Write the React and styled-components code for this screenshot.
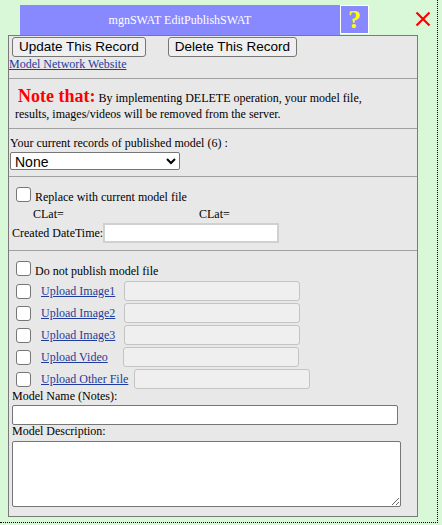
import React from "react";
import styled, { createGlobalStyle } from "styled-components";

const GlobalStyle = createGlobalStyle`
  html, body {
    margin: 0;
    padding: 0;
    background: #d8f8d8;
  }
  body {
    font-family: "Liberation Serif", "Times New Roman", serif;
    font-size: 12px;
    color: #000;
  }
`;

const Frame = styled.div`
  width: 438px;
  height: 523px;
  box-sizing: border-box;
  border-right: 1px dotted #000;
  border-bottom: 1px dotted #000;
`;

const TopBar = styled.div`
  display: flex;
  align-items: flex-start;
  padding: 5px 0 0 20px;
  height: 30px;
`;

const Title = styled.div`
  width: 320px;
  height: 30px;
  background: #8888ff;
  color: #fff;
  font-size: 12px;
  display: flex;
  align-items: center;
  justify-content: center;
`;

const HelpBox = styled.div`
  width: 29px;
  height: 29px;
  box-sizing: border-box;
  border: 1px solid #fff;
  background: #8888ff;
  color: #ffff00;
  font-weight: bold;
  font-size: 26px;
  line-height: 27px;
  text-align: center;
`;

const CloseIcon = styled.svg`
  margin: 6px 0 0 46px;
  width: 16px;
  height: 16px;
`;

const Panel = styled.div`
  margin-left: 8px;
  width: 410px;
  box-sizing: border-box;
  border: 1px solid #7a7a7a;
  background: #e8e8e8;
`;

const Section = styled.div`
  padding: ${(p) => p.$pad};
  border-bottom: ${(p) => (p.$last ? "none" : "1px solid #a0a0a0")};
`;

const ButtonRow = styled.div`
  display: flex;
  gap: 22px;
  padding-left: 3px;
`;

const Button = styled.button`
  height: 20px;
  box-sizing: border-box;
  padding: 1px 6px;
  font-family: "Liberation Sans", Arial, sans-serif;
  font-size: 13.5px;
  line-height: 16px;
  color: #000;
  background: #efefef;
  border: 1px solid #767676;
  border-radius: 3px;
`;

const SiteLink = styled.a`
  display: block;
  font-size: 12px;
  line-height: 14px;
  color: #1f3b9c;
  text-decoration: underline;
`;

const Note = styled.div`
  line-height: 16px;
  text-indent: 3px;
`;

const NoteHead = styled.span`
  color: #ff0000;
  font-weight: bold;
  font-size: 18px;
`;

const Label = styled.div`
  line-height: ${(p) => p.$lh || "15px"};
  padding-left: ${(p) => p.$indent || "0"};
`;

const Select = styled.select`
  display: block;
  margin-top: 1px;
  width: 170px;
  height: 18px;
  font-family: "Liberation Sans", Arial, sans-serif;
  font-size: 14px;
  background: #fff;
  border: 1px solid #767676;
  border-radius: 2px;
  color: #000;
`;

const CheckRow = styled.div`
  display: flex;
  align-items: flex-end;
  height: 18px;
  margin-bottom: ${(p) => p.$after || "0"};
`;

const CheckBox = styled.input.attrs({ type: "checkbox" })`
  appearance: none;
  width: 15px;
  height: 15px;
  box-sizing: border-box;
  margin: 0 0 3px 7px;
  background: #fff;
  border: 1px solid #767676;
  border-radius: 3px;
  flex: none;
`;

const CheckText = styled.span`
  margin-left: 4px;
  line-height: 15px;
`;

const CoordRow = styled.div`
  display: grid;
  grid-template-columns: 166px auto;
  padding-left: 24px;
  margin-top: 2px;
  line-height: 15px;
`;

const FieldRow = styled.div`
  display: flex;
  align-items: center;
  margin-top: 1px;
  padding-left: 3px;
`;

const DateInput = styled.input`
  width: 176px;
  height: 20px;
  box-sizing: border-box;
  border: 2px solid #d0d0d0;
  background: #fff;
  padding: 0 2px;
`;

const UploadRow = styled.div`
  display: flex;
  align-items: center;
  height: 22px;
  & > input[type="checkbox"] {
    margin-bottom: 0;
  }
`;

const UploadLink = styled.a`
  margin-left: 10px;
  color: #1f3b9c;
  text-decoration: underline;
  line-height: 15px;
`;

const FileField = styled.input`
  margin-left: ${(p) => p.$lead}px;
  width: 176px;
  height: 20px;
  box-sizing: border-box;
  background: #efefef;
  border: 1px solid #c4c4c4;
  border-radius: 3px;
`;

const TextField = styled.input`
  display: block;
  margin: 2px 0 0 3px;
  width: 386px;
  height: 20px;
  box-sizing: border-box;
  background: #fff;
  border: 1px solid #767676;
  border-radius: 2px;
`;

const TextArea = styled.textarea`
  display: block;
  margin: 3px 0 0 3px;
  width: 389px;
  height: 66px;
  box-sizing: border-box;
  background: #fff;
  border: 1px solid #767676;
  border-radius: 2px;
  resize: both;
`;

const uploads = [
  { label: "Upload Image1", lead: 9 },
  { label: "Upload Image2", lead: 9 },
  { label: "Upload Image3", lead: 9 },
  { label: "Upload Video", lead: 15 },
  { label: "Upload Other File", lead: 6 },
];

export default function App() {
  return (
    <>
      <GlobalStyle />
      <Frame>
        <TopBar>
          <Title>mgnSWAT EditPublishSWAT</Title>
          <HelpBox>?</HelpBox>
          <CloseIcon viewBox="0 0 16 16">
            <path d="M1.5 1.5 L14.5 14.5 M14.5 1.5 L1.5 14.5" stroke="#ff0000" strokeWidth="2.2" fill="none" />
          </CloseIcon>
        </TopBar>
        <Panel>
          <Section $pad="1px 0 7px 0">
            <ButtonRow>
              <Button>Update This Record</Button>
              <Button>Delete This Record</Button>
            </ButtonRow>
            <SiteLink href="#">Model Network Website</SiteLink>
          </Section>
          <Section $pad="9px 6px 6px 6px">
            <Note>
              <NoteHead>Note that:</NoteHead> By implementing DELETE operation, your model file,
              <br />
              results, images/videos will be removed from the server.
            </Note>
          </Section>
          <Section $pad="7px 0 6px 1px">
            <Label>Your current records of published model (6) :</Label>
            <Select defaultValue="none">
              <option value="none">None</option>
            </Select>
          </Section>
          <Section $pad="10px 0 7px 0">
            <CheckRow>
              <CheckBox />
              <CheckText>Replace with current model file</CheckText>
            </CheckRow>
            <CoordRow>
              <span>CLat=</span>
              <span>CLat=</span>
            </CoordRow>
            <FieldRow>
              <span>Created DateTime:</span>
              <DateInput />
            </FieldRow>
          </Section>
          <Section $pad="10px 0 9px 0" $last>
            <CheckRow $after="1px">
              <CheckBox />
              <CheckText>Do not publish model file</CheckText>
            </CheckRow>
            {uploads.map((u) => (
              <UploadRow key={u.label}>
                <CheckBox />
                <UploadLink href="#">{u.label}</UploadLink>
                <FileField $lead={u.lead} disabled />
              </UploadRow>
            ))}
            <Label $lh="13px" $indent="3px">Model Name (Notes):</Label>
            <TextField />
            <Label $lh="13px" $indent="3px">Model Description:</Label>
            <TextArea />
          </Section>
        </Panel>
      </Frame>
    </>
  );
}
